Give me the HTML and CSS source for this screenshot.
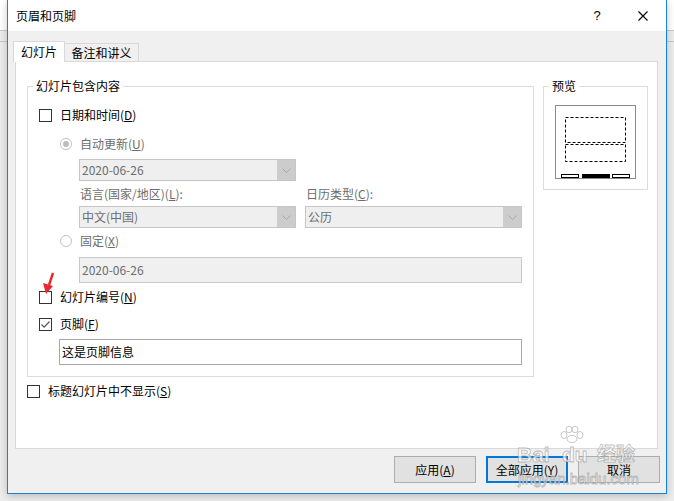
FILE: index.html
```html
<!DOCTYPE html>
<html lang="zh-CN">
<head>
<meta charset="utf-8">
<title>页眉和页脚</title>
<link rel="stylesheet" href="styles.css">
</head>
<body>
<div class="desktop">
  <div class="dialog">
    <div class="titlebar">
      <span class="title">页眉和页脚</span>
      <div class="tb-btns">
        <span class="tb-btn help">?</span>
        <span class="tb-btn close">
          <svg width="10" height="10" viewBox="0 0 10 10"><path d="M0.5 0.5 L9.5 9.5 M9.5 0.5 L0.5 9.5" stroke="#000" stroke-width="1.1" fill="none"/></svg>
        </span>
      </div>
    </div>
    <div class="client">
      <div class="tabs">
        <div class="tab active">幻灯片</div>
        <div class="tab">备注和讲义</div>
      </div>
      <div class="panel">
        <div class="panel-top">
          <fieldset class="group">
            <legend>幻灯片包含内容</legend>
            <div class="group-body">
              <div class="row check-row r1"><span class="cb"></span><span>日期和时间(<u>D</u>)</span></div>
              <div class="row radio-row r2 disabled"><span class="rb"><span class="dot"></span></span><span>自动更新(<u>U</u>)</span></div>
              <div class="select s1 disabled"><span class="sel-text">2020-06-26</span><span class="arrow"><svg width="9" height="5" viewBox="0 0 9 5"><path d="M0.5 0.5 L4.5 4.5 L8.5 0.5" stroke="#a8a8a8" fill="none"/></svg></span></div>
              <div class="pair labels disabled">
                <span>语言(国家/地区)(<u>L</u>):</span>
                <span>日历类型(<u>C</u>):</span>
              </div>
              <div class="pair selects">
                <div class="select disabled"><span class="sel-text">中文(中国)</span><span class="arrow"><svg width="9" height="5" viewBox="0 0 9 5"><path d="M0.5 0.5 L4.5 4.5 L8.5 0.5" stroke="#a8a8a8" fill="none"/></svg></span></div>
                <div class="select disabled"><span class="sel-text">公历</span><span class="arrow"><svg width="9" height="5" viewBox="0 0 9 5"><path d="M0.5 0.5 L4.5 4.5 L8.5 0.5" stroke="#a8a8a8" fill="none"/></svg></span></div>
              </div>
              <div class="row radio-row r6 disabled"><span class="rb empty"></span><span>固定(<u>X</u>)</span></div>
              <div class="textbox fixed disabled">2020-06-26</div>
              <div class="row check-row r8"><span class="cb"></span><span>幻灯片编号(<u>N</u>)</span></div>
              <div class="row check-row r9"><span class="cb checked"><svg width="11" height="11" viewBox="0 0 11 11"><path d="M1.5 5.5 L4.2 8.2 L9.5 2.5" stroke="#555" stroke-width="1.2" fill="none"/></svg></span><span>页脚(<u>F</u>)</span></div>
              <div class="textbox footer">这是页脚信息</div>
            </div>
          </fieldset>
          <fieldset class="preview">
            <legend>预览</legend>
            <div class="preview-box">
              <svg width="81" height="74" viewBox="0 0 81 74">
                <rect x="0.5" y="0.5" width="80" height="73" fill="#fff" stroke="#8a8a8a"/>
                <rect x="10.5" y="12.5" width="60" height="25" fill="none" stroke="#000" stroke-dasharray="3 2"/>
                <rect x="10.5" y="39.5" width="60" height="17" fill="none" stroke="#000" stroke-dasharray="3 2"/>
                <rect x="6.5" y="69.5" width="17" height="3" fill="#fff" stroke="#000"/>
                <rect x="27" y="69" width="28" height="4" fill="#000"/>
                <rect x="57.5" y="69.5" width="17" height="3" fill="#fff" stroke="#000"/>
              </svg>
            </div>
          </fieldset>
        </div>
        <div class="row check-row title-row"><span class="cb"></span><span>标题幻灯片中不显示(<u>S</u>)</span></div>
      </div>
      <div class="buttons">
        <button class="btn">应用(<u>A</u>)</button>
        <button class="btn default">全部应用(<u>Y</u>)</button>
        <button class="btn">取消</button>
      </div>
    </div>
  </div>

  <svg class="cursor" width="16" height="24" viewBox="0 0 16 24">
    <path d="M13 1 L9 13" stroke="#e8282d" stroke-width="2.4" fill="none"/>
    <polygon points="3,11 13,14 6,22" fill="#e8282d"/>
  </svg>

  <div class="watermark">
    <svg class="paw" width="28" height="17" viewBox="0 0 28 17">
      <g fill="rgba(255,255,255,0.7)" stroke="rgba(140,140,140,0.6)" stroke-width="0.8">
        <ellipse cx="6" cy="9" rx="3" ry="3.5"/>
        <ellipse cx="11" cy="3.5" rx="3" ry="3.2"/>
        <ellipse cx="17" cy="3.5" rx="3" ry="3.2"/>
        <ellipse cx="22" cy="9" rx="3" ry="3.5"/>
        <ellipse cx="14" cy="13" rx="5" ry="3.6"/>
      </g>
    </svg>
    <span class="wm-bai">Bai</span><span class="wm-du">du</span><span class="wm-jy">经验</span>
    <span class="wm-url">jingyan.baidu.com</span>
  </div>
</div>
</body>
</html>
```
FILE: styles.css
```css
* { box-sizing: border-box; }
html, body { margin: 0; padding: 0; }
body {
  font-family: "Noto Sans CJK SC", "Noto Sans", sans-serif;
  font-size: 12px;
  line-height: 16px;
  color: #000;
}
.desktop {
  position: relative;
  width: 674px;
  height: 501px;
  overflow: hidden;
  background:
    linear-gradient(#c9c9c9, #c9c9c9) 0 30px / 100% 1px no-repeat,
    linear-gradient(#c9c9c9, #c9c9c9) 0 41px / 100% 1px no-repeat,
    linear-gradient(#ffffff, #ffffff) 0 0 / 100% 30px no-repeat,
    #ededed;
}
.dialog {
  margin-left: 7px;
  width: 660px;
  height: 494px;
  border: 1px solid #1883d7;
  border-top: 0;
  background: #f0f0f0;
  box-shadow: 0 2px 8px rgba(0,0,0,0.22);
  display: flex;
  flex-direction: column;
}
.titlebar {
  height: 31px;
  background: #fff;
  display: flex;
  align-items: center;
  flex-shrink: 0;
}
.title { padding-left: 8px; }
.tb-btns { margin-left: auto; display: flex; height: 31px; }
.tb-btn {
  width: 46px;
  height: 31px;
  display: flex;
  align-items: center;
  justify-content: center;
}
.help { font-family: "Liberation Sans", sans-serif; font-size: 13px; }

.client { flex: 1; }
.tabs {
  display: flex;
  align-items: flex-end;
  margin: 10px 0 0 5px;
  height: 20px;
  position: relative;
  z-index: 1;
}
.tab {
  height: 18px;
  padding: 0 6px;
  border: 1px solid #d9d9d9;
  border-bottom: 0;
  border-left: 0;
  background: #f0f0f0;
  display: flex;
  align-items: center;
  justify-content: center;
  width: 74px;
  padding-top: 1px;
}
.tab.active {
  width: 52px;
  height: 21px;
  margin-bottom: -1px;
  background: #fff;
  border-left: 1px solid #d9d9d9;
  padding-top: 0;
}
.panel {
  margin-left: 7px;
  width: 643px;
  height: 388px;
  border: 1px solid #d9d9d9;
  background: #fff;
  padding: 16px 0 0 11px;
}
.panel-top { display: flex; align-items: flex-start; gap: 9px; }
fieldset { margin: 0; padding: 0; min-width: 0; }
legend {
  padding: 0 3px;
  margin-left: 5px;
  line-height: 16px;
}
.group {
  width: 507px;
  border: 1px solid #dcdcdc;
}
.group-body { padding: 13px 0 11px 11px; }
.row { display: flex; align-items: center; height: 16px; gap: 8px; }
.cb {
  width: 13px;
  height: 13px;
  border: 1px solid #333;
  background: #fff;
  display: flex;
  align-items: center;
  justify-content: center;
  flex-shrink: 0;
}
.rb {
  width: 12px;
  height: 12px;
  border: 1px solid #c2c2c2;
  border-radius: 50%;
  display: flex;
  align-items: center;
  justify-content: center;
  flex-shrink: 0;
}
.dot { width: 6px; height: 6px; border-radius: 50%; background: #bdbdbd; }
.disabled { color: #6d6d6d; }
.radio-row { margin-left: 21px; }
.r2 { margin-top: 13px; }
.r6 { margin-top: 5px; }
.r8 { margin-top: 6px; }
.r9 { margin-top: 11px; }

.select {
  width: 217px;
  height: 22px;
  border: 1px solid #c6c6c6;
  background: #efefef;
  display: flex;
  align-items: center;
}
.sel-text { flex: 1; padding-left: 2px; }
.arrow {
  width: 18px;
  height: 20px;
  background: #cccccc;
  display: flex;
  align-items: center;
  justify-content: center;
}
.s1 { margin: 7px 0 0 40px; }
.pair {
  display: grid;
  grid-template-columns: 217px 217px;
  column-gap: 9px;
  margin-left: 40px;
}
.labels { margin-top: 5px; height: 16px; padding-left: 1px; }
.selects { margin-top: 4px; }
.textbox {
  height: 26px;
  display: flex;
  align-items: center;
  padding-left: 2px;
}
.fixed {
  margin: 8px 0 0 40px;
  width: 443px;
  background: #f0f0f0;
  border: 1px solid #c8c8c8;
}
.footer {
  margin: 7px 0 0 20px;
  width: 463px;
  background: #fff;
  border: 1px solid #a9a9a9;
}
.preview {
  width: 105px;
  height: 112px;
  border: 1px solid #dcdcdc;
}
.preview-box { padding: 11px 0 0 11px; line-height: 0; }
.title-row { margin-top: 6px; }

.buttons {
  display: flex;
  justify-content: flex-end;
  gap: 10px;
  padding-right: 6px;
  margin-top: 7px;
}
.btn {
  width: 82px;
  height: 27px;
  border: 1px solid #adadad;
  background: #e1e1e1;
  font: inherit;
  color: #000;
  padding: 0;
}
.btn.default { border: 2px solid #0078d7; }

.cursor { position: absolute; left: 40px; top: 272px; }

.watermark {
  position: absolute;
  left: 517px;
  top: 426px;
  width: 130px;
  height: 66px;
  font-family: "Liberation Sans", sans-serif;
  color: rgba(255,255,255,0.7);
  -webkit-text-stroke: 0.8px rgba(140,140,140,0.6);
  pointer-events: none;
}
.paw { position: absolute; left: 41px; top: 0; }
.wm-bai, .wm-du, .wm-jy, .wm-url { position: absolute; font-weight: bold; line-height: 1; }
.wm-bai { left: 0; top: 18px; font-size: 21px; }
.wm-du { left: 45px; top: 18px; font-size: 21px; }
.wm-jy { left: 80px; top: 17px; font-size: 19px; font-family: "Noto Sans CJK SC", sans-serif; }
.wm-url { left: 1px; top: 45px; font-size: 15px; font-weight: normal; }
```
